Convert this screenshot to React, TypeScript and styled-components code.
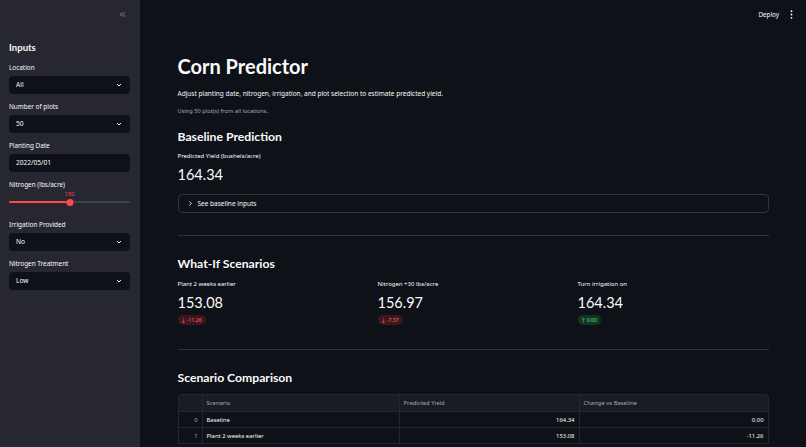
import React from "react";
import styled, { createGlobalStyle } from "styled-components";

const GlobalStyle = createGlobalStyle`
  html, body {
    margin: 0;
    padding: 0;
    background: #0e1117;
  }
  body {
    font-family: "Noto Sans", "Lato", sans-serif;
    color: #fafafa;
  }
  * { box-sizing: border-box; }
`;

const headingFont = `"Lato", "Noto Sans", sans-serif`;

const Page = styled.div`
  display: flex;
  width: 806px;
  height: 447px;
  overflow: hidden;
  background: #0e1117;
`;

const Sidebar = styled.aside`
  width: 140px;
  flex-shrink: 0;
  background: #262730;
  display: flex;
  flex-direction: column;
  padding: 7px 10px 0 9px;
`;

const SidebarTop = styled.div`
  display: flex;
  align-items: center;
  justify-content: flex-end;
  height: 14px;
  color: #a3a8b8;
  padding-right: 3px;
`;

const SidebarTitle = styled.h2`
  margin: 20px 0 7.5px;
  font-family: ${headingFont};
  font-size: 9.6px;
  line-height: 14px;
  font-weight: 700;
`;

const Field = styled.div`
  display: flex;
  flex-direction: column;
  margin-bottom: 8px;
`;

const Label = styled.label`
  font-size: 6.4px;
  color: #fafafa;
  margin-bottom: 4px;
  line-height: 9px;
`;

const Control = styled.div`
  height: 18px;
  background: #0e1117;
  border-radius: 4px;
  display: flex;
  align-items: center;
  justify-content: space-between;
  padding: 0 7px;
  font-size: 6.6px;
  color: #fafafa;
`;

const SliderWrap = styled.div`
  position: relative;
  height: 19px;
`;

const SliderTrack = styled.div`
  position: absolute;
  left: 0;
  right: 0;
  top: 8.5px;
  height: 2px;
  border-radius: 1px;
  background: #3f414b;
`;

const SliderFill = styled.div`
  position: absolute;
  left: 0;
  top: 0;
  bottom: 0;
  background: #ff4b4b;
  border-radius: 1px;
`;

const SliderThumb = styled.div`
  position: absolute;
  top: 6px;
  width: 7px;
  height: 7px;
  border-radius: 50%;
  background: #ff4b4b;
  transform: translateX(-50%);
`;

const SliderValue = styled.div`
  position: absolute;
  top: -3px;
  line-height: 9px;
  transform: translateX(-50%);
  font-size: 5.6px;
  color: #ff4b4b;
`;

const Main = styled.main`
  flex: 1;
  display: flex;
  flex-direction: column;
  min-width: 0;
`;

const Header = styled.header`
  flex-shrink: 0;
  height: 28px;
  display: flex;
  align-items: center;
  justify-content: flex-end;
  gap: 11px;
  padding-right: 13px;
`;

const DeployButton = styled.span`
  font-size: 6.3px;
  color: #fafafa;
`;

const Content = styled.div`
  flex-shrink: 0;
  width: 591px;
  margin: 0 auto;
  padding-top: 24px;
`;

const Title = styled.h1`
  margin: 0;
  font-family: ${headingFont};
  font-size: 20px;
  font-weight: 700;
  line-height: 28px;
`;

const Paragraph = styled.p`
  margin: 8px 0 0;
  font-size: 6.5px;
  line-height: 11px;
`;

const Caption = styled.p`
  margin: 8px 0 0;
  font-size: 5.7px;
  color: #a3a8b8;
  line-height: 9px;
`;

const SectionTitle = styled.h2<{ $gap?: number }>`
  margin: ${(p) => p.$gap ?? 0}px 0 0;
  font-family: ${headingFont};
  font-size: 12.2px;
  font-weight: 700;
  line-height: 18px;
`;

const MetricLabel = styled.div<{ $gap?: number }>`
  margin-top: ${(p) => p.$gap ?? 0}px;
  font-size: 6px;
  line-height: 9px;
  color: #fafafa;
`;

const MetricValue = styled.div`
  font-family: ${headingFont};
  font-size: 14.5px;
  line-height: 22px;
  margin-top: 3px;
`;

const Delta = styled.span<{ $up?: boolean }>`
  display: inline-flex;
  align-items: center;
  gap: 2px;
  margin-top: 1px;
  height: 10px;
  padding: 0 4px;
  border-radius: 5px;
  font-size: 5.2px;
  color: ${(p) => (p.$up ? "#5ce488" : "#ff6c6c")};
  background: ${(p) => (p.$up ? "rgba(33,195,84,0.2)" : "rgba(255,43,43,0.2)")};
`;

const Expander = styled.div`
  margin-top: 8px;
  height: 19px;
  border: 1px solid #31333f;
  border-radius: 4px;
  display: flex;
  align-items: center;
  gap: 4px;
  padding-left: 8px;
  font-size: 6.5px;
`;

const Divider = styled.hr<{ $top: number }>`
  border: none;
  border-top: 1px solid #31333f;
  margin: ${(p) => p.$top}px 0 19px;
`;

const MetricGrid = styled.div`
  display: grid;
  grid-template-columns: repeat(3, 1fr);
  column-gap: 9px;
  margin-top: 7px;
`;

const Metric = styled.div`
  display: flex;
  flex-direction: column;
  align-items: flex-start;
`;

const Table = styled.div`
  margin-top: 7px;
  border: 1px solid #24262e;
  border-bottom: none;
  border-radius: 4px 4px 0 0;
  overflow: hidden;
`;

const Row = styled.div<{ $head?: boolean }>`
  display: grid;
  grid-template-columns: 24px 197px 180px 1fr;
  height: ${(p) => (p.$head ? 17 : 16)}px;
  background: ${(p) => (p.$head ? "#1a1c24" : "#0e1117")};
  border-bottom: 1px solid #24262e;
`;

const Cell = styled.div<{ $right?: boolean; $muted?: boolean }>`
  display: flex;
  align-items: center;
  justify-content: ${(p) => (p.$right ? "flex-end" : "flex-start")};
  padding: 0 4px;
  font-size: 5.9px;
  color: ${(p) => (p.$muted ? "#a3a8b8" : "#fafafa")};
  border-right: 1px solid #24262e;
  &:last-child { border-right: none; }
`;

const Chevron = () => (
  <svg width="8" height="8" viewBox="0 0 24 24" fill="none" stroke="#fafafa" strokeWidth="3" strokeLinecap="round" strokeLinejoin="round">
    <path d="M7 10l5 5 5-5" />
  </svg>
);

const Select: React.FC<{ label: string; value: string }> = ({ label, value }) => (
  <Field>
    <Label>{label}</Label>
    <Control>
      {value}
      <Chevron />
    </Control>
  </Field>
);

const metrics = [
  { label: "Plant 2 weeks earlier", value: "153.08", delta: "-11.26", up: false },
  { label: "Nitrogen +30 lbs/acre", value: "156.97", delta: "-7.37", up: false },
  { label: "Turn irrigation on", value: "164.34", delta: "0.00", up: true },
];

const rows = [
  { i: 0, name: "Baseline", y: "164.34", c: "0.00" },
  { i: 1, name: "Plant 2 weeks earlier", y: "153.08", c: "-11.26" },
];

const App: React.FC = () => {
  const sliderPct = 50;
  return (
    <Page>
      <GlobalStyle />
      <Sidebar>
        <SidebarTop>
          <svg width="9" height="9" viewBox="0 0 24 24" fill="none" stroke="currentColor" strokeWidth="2" strokeLinecap="round" strokeLinejoin="round">
            <path d="M11 17l-5-5 5-5" />
            <path d="M18 17l-5-5 5-5" />
          </svg>
        </SidebarTop>
        <SidebarTitle>Inputs</SidebarTitle>
        <Select label="Location" value="All" />
        <Select label="Number of plots" value="50" />
        <Field>
          <Label>Planting Date</Label>
          <Control>2022/05/01</Control>
        </Field>
        <Field>
          <Label>Nitrogen (lbs/acre)</Label>
          <SliderWrap>
            <SliderValue style={{ left: `${sliderPct}%` }}>150</SliderValue>
            <SliderTrack>
              <SliderFill style={{ width: `${sliderPct}%` }} />
            </SliderTrack>
            <SliderThumb style={{ left: `${sliderPct}%` }} />
          </SliderWrap>
        </Field>
        <Select label="Irrigation Provided" value="No" />
        <Select label="Nitrogen Treatment" value="Low" />
      </Sidebar>
      <Main>
        <Header>
          <DeployButton>Deploy</DeployButton>
          <svg width="3" height="9" viewBox="0 0 3 9" fill="#fafafa">
            <circle cx="1.5" cy="1.2" r="0.9" />
            <circle cx="1.5" cy="4.5" r="0.9" />
            <circle cx="1.5" cy="7.8" r="0.9" />
          </svg>
        </Header>
        <Content>
          <Title>Corn Predictor</Title>
          <Paragraph>Adjust planting date, nitrogen, irrigation, and plot selection to estimate predicted yield.</Paragraph>
          <Caption>Using 50 plot(s) from all locations.</Caption>
          <SectionTitle $gap={12}>Baseline Prediction</SectionTitle>
          <MetricLabel $gap={6}>Predicted Yield (bushels/acre)</MetricLabel>
          <MetricValue>164.34</MetricValue>
          <Expander>
            <svg width="7" height="7" viewBox="0 0 24 24" fill="none" stroke="#fafafa" strokeWidth="3" strokeLinecap="round" strokeLinejoin="round">
              <path d="M9 6l6 6-6 6" />
            </svg>
            See baseline inputs
          </Expander>
          <Divider $top={22} />
          <SectionTitle>What-If Scenarios</SectionTitle>
          <MetricGrid>
            {metrics.map((m) => (
              <Metric key={m.label}>
                <MetricLabel>{m.label}</MetricLabel>
                <MetricValue>{m.value}</MetricValue>
                <Delta $up={m.up}>
                  {m.up ? "↑" : "↓"} {m.delta}
                </Delta>
              </Metric>
            ))}
          </MetricGrid>
          <Divider $top={24} />
          <SectionTitle>Scenario Comparison</SectionTitle>
          <Table>
            <Row $head>
              <Cell />
              <Cell $muted>Scenario</Cell>
              <Cell $muted>Predicted Yield</Cell>
              <Cell $muted>Change vs Baseline</Cell>
            </Row>
            {rows.map((r) => (
              <Row key={r.i}>
                <Cell $right $muted>{r.i}</Cell>
                <Cell>{r.name}</Cell>
                <Cell $right>{r.y}</Cell>
                <Cell $right>{r.c}</Cell>
              </Row>
            ))}
          </Table>
        </Content>
      </Main>
    </Page>
  );
};

export default App;
